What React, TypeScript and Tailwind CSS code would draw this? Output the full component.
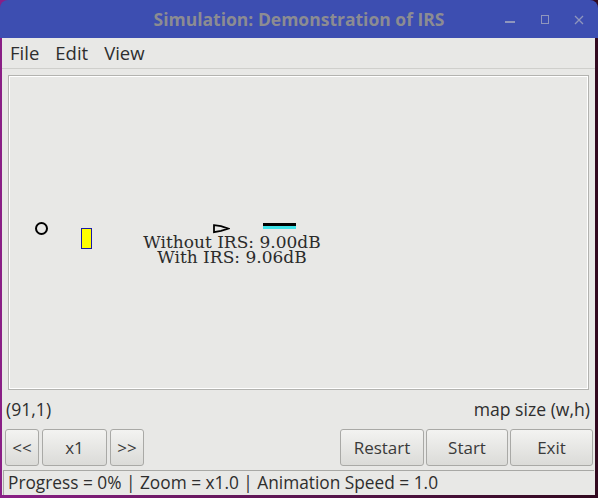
const ui = { fontFamily: '"Open Sans", "Noto Sans", "DejaVu Sans", sans-serif' };
const serif = { fontFamily: '"DejaVu Serif", "Liberation Serif", serif' };

function Btn({ label, className }: { label: string; className: string }) {
  return (
    <button
      className={`flex h-[37px] shrink-0 items-center justify-center rounded-[3px] border border-[#a9a9a6] bg-gradient-to-b from-[#f3f3f1] to-[#dbdbd8] text-[17px] text-[#3a3a3a] ${className}`}
    >
      {label}
    </button>
  );
}

export default function App() {
  return (
    <div
      className="relative h-[498px] w-[598px] overflow-hidden bg-gradient-to-r from-[#8a1f86] via-[#5a1550] to-[#32091f]"
      style={ui}
    >
      {/* window */}
      <div className="flex h-[495px] w-[598px] flex-col">
        {/* title bar */}
        <div className="relative flex h-[38px] shrink-0 items-center justify-center rounded-t-[8px] bg-[#3d4eb1]">
          <span className="text-[17.5px] font-bold text-[#8c8c92]">Simulation: Demonstration of IRS</span>
          <div className="absolute left-[505px] top-[21px] h-[1.5px] w-[10px] bg-[#8f96bd]" />
          <div className="absolute left-[541px] top-[15px] h-[9px] w-[8px] border border-[#8f96bd]" />
          <svg className="absolute left-[574px] top-[15px]" width="10" height="10" viewBox="0 0 10 10">
            <path d="M1 1 L9 9 M9 1 L1 9" stroke="#8f96bd" strokeWidth="1.3" />
          </svg>
        </div>

        <div className="ml-[2px] mr-[3px] flex flex-1 flex-col bg-[#e8e8e6]">
          {/* menu */}
          <div className="flex h-[31px] shrink-0 items-center gap-[16px] border-b border-[#cfcfcc] pl-[8px] text-[18.5px] text-[#2e2e2e]">
            <span>File</span>
            <span>Edit</span>
            <span>View</span>
          </div>

          {/* canvas */}
          <div className="mx-[6px] mt-[6px] h-[315px] shrink-0 border border-[#b3b3b0]">
            <div className="relative h-full w-full border border-white">
              <div className="absolute left-[25px] top-[145px] h-[13px] w-[13px] rounded-full border-2 border-black" />
              <div className="absolute left-[71px] top-[151px] h-[21px] w-[11px] border border-[#1b1ba3] bg-[#ffff00]" />
              <svg className="absolute left-[203px] top-[147px]" width="17" height="10" viewBox="0 0 17 10">
                <path d="M1 1.2 L8 2.2 L15.5 4.6 L8 6.8 L1 8.2 Z" fill="none" stroke="black" strokeWidth="1.8" />
              </svg>
              <div className="absolute left-[253px] top-[146px] h-[2.5px] w-[33px] bg-black" />
              <div className="absolute left-[253px] top-[148.5px] h-[3px] w-[33px] bg-[#3de2e8]" />
              <div
                className="absolute left-[222px] top-[158px] -translate-x-1/2 whitespace-nowrap text-center text-[17px] leading-[15px] text-[#2b2b2b]"
                style={serif}
              >
                <div>Without IRS: 9.00dB</div>
                <div>With IRS: 9.06dB</div>
              </div>
            </div>
          </div>

          {/* coordinates */}
          <div className="mt-[8px] flex h-[22px] shrink-0 items-center justify-between pl-[4px] pr-[5px] text-[17.6px] leading-[22px] text-[#2e2e2e]">
            <span>(91,1)</span>
            <span>map size (w,h)</span>
          </div>

          {/* controls */}
          <div className="mt-[9px] flex shrink-0 items-center pl-[3px] pr-[2px]">
            <Btn label="<<" className="w-[34px]" />
            <Btn label="x1" className="ml-[3px] w-[65px]" />
            <Btn label=">>" className="ml-[3px] w-[34px]" />
            <div className="flex-1" />
            <Btn label="Restart" className="w-[84px]" />
            <Btn label="Start" className="ml-[2px] w-[82px]" />
            <Btn label="Exit" className="ml-[2px] w-[83px]" />
          </div>

          {/* status bar */}
          <div className="mx-[1px] mt-[4px] flex h-[25px] shrink-0 items-center border-l border-t border-[#a8a8a5] pl-[4px] text-[17.3px] text-[#2e2e2e]">
            Progress = 0% | Zoom = x1.0 | Animation Speed = 1.0
          </div>
        </div>
      </div>
    </div>
  );
}
